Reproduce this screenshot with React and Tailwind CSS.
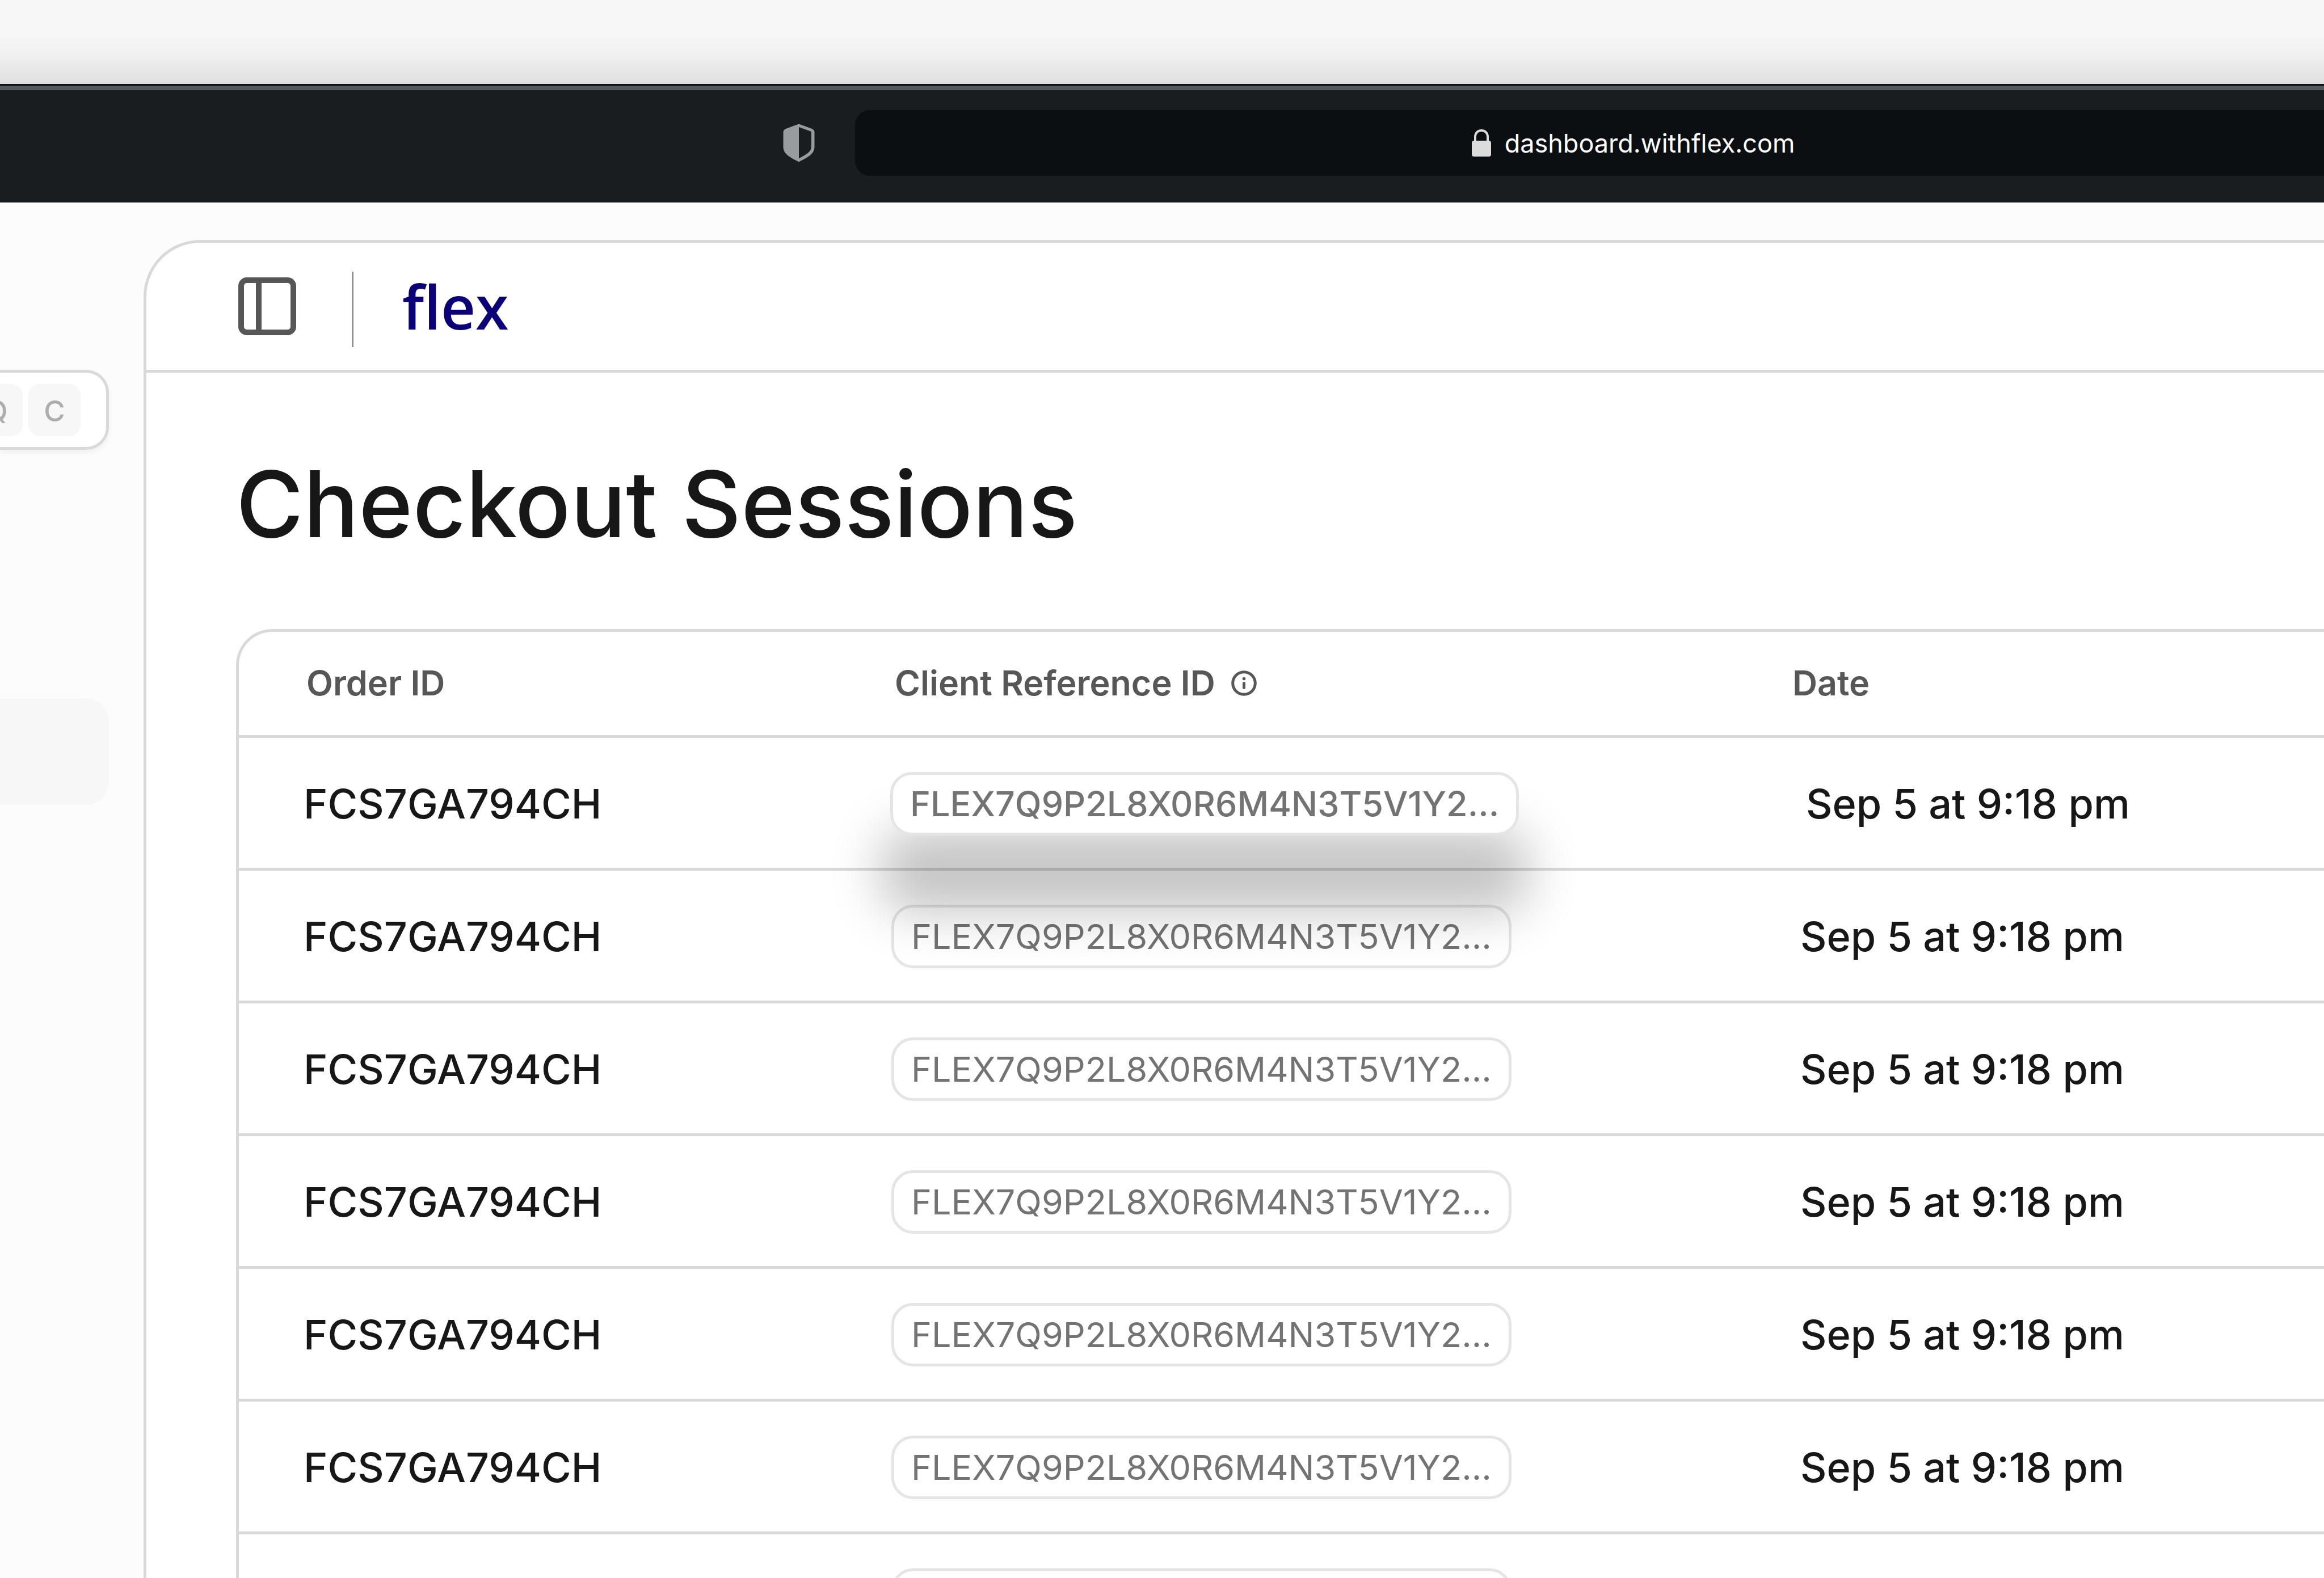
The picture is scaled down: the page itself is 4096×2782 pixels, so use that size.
const sessions = [
  { orderId: 'FCS7GA794CH', reference: 'FLEX7Q9P2L8X0R6M4N3T5V1Y2...', date: 'Sep 5 at 9:18 pm', active: true },
  { orderId: 'FCS7GA794CH', reference: 'FLEX7Q9P2L8X0R6M4N3T5V1Y2...', date: 'Sep 5 at 9:18 pm' },
  { orderId: 'FCS7GA794CH', reference: 'FLEX7Q9P2L8X0R6M4N3T5V1Y2...', date: 'Sep 5 at 9:18 pm' },
  { orderId: 'FCS7GA794CH', reference: 'FLEX7Q9P2L8X0R6M4N3T5V1Y2...', date: 'Sep 5 at 9:18 pm' },
  { orderId: 'FCS7GA794CH', reference: 'FLEX7Q9P2L8X0R6M4N3T5V1Y2...', date: 'Sep 5 at 9:18 pm' },
  { orderId: 'FCS7GA794CH', reference: 'FLEX7Q9P2L8X0R6M4N3T5V1Y2...', date: 'Sep 5 at 9:18 pm' },
  { orderId: 'FCS7GA794CH', reference: 'FLEX7Q9P2L8X0R6M4N3T5V1Y2...', date: 'Sep 5 at 9:18 pm' },
]

const ShieldIcon = () => (
  <svg viewBox="0 0 56 68" className="w-14 h-[68px] shrink-0" aria-hidden="true">
    <path
      d="M28 0.5 L51 9 Q55.500 11 55.500 15 V41 C55.500 54 43 59.500 28 67.500 C13 59.500 0.500 54 0.500 41 V15 Q0.500 11 5 9 Z M28 6 V61.500 C41 54 50 50 50 40 V14 Z"
      fill="#989c9f"
      fillRule="evenodd"
    />
  </svg>
)

const LockIcon = () => (
  <svg viewBox="0 0 34 48" className="w-[34px] h-12 shrink-0" aria-hidden="true">
    <rect x="0" y="20" width="34" height="28" rx="4" fill="#dcdcdc" />
    <path d="M6 21 V13.500 C6 6.500 10.500 2 17 2 C23.500 2 28 6.500 28 13.500 V21" fill="none" stroke="#dcdcdc" strokeWidth="4" />
  </svg>
)

const SidebarIcon = () => (
  <svg viewBox="0 0 102 102" className="w-[102px] h-[102px]" fill="none" stroke="#575757" strokeWidth="10" aria-hidden="true">
    <rect x="5" y="5" width="92" height="92" rx="10" />
    <path d="M36 5 V97" />
  </svg>
)

const InfoIcon = () => (
  <svg viewBox="0 0 45 45" className="w-[45px] h-[45px] shrink-0" fill="none" stroke="#575757" strokeWidth="5" strokeLinecap="round" aria-hidden="true">
    <circle cx="22.500" cy="22.500" r="19.800" />
    <path d="M22.500 22.500 V30.500" />
    <circle cx="22.500" cy="14.500" r="2.800" fill="#575757" stroke="none" />
  </svg>
)

const BrowserBar = () => (
  <header className="flex flex-col h-[209px] shrink-0 border-t-[3px] border-[#0d0f10] bg-[#191d20]">
    <div className="h-2 shrink-0 bg-[#54585a]" />
    <div className="flex flex-1 items-start pt-[35px]">
      <button type="button" aria-label="Privacy report" className="ml-[1380px] mt-6">
        <ShieldIcon />
      </button>
      <div className="flex flex-1 items-center justify-center gap-6 h-[116px] ml-[71px] pl-[154px] rounded-l-[26px] bg-[#0b0f12]">
        <LockIcon />
        <a href="#" className="text-[45px] leading-none text-white">dashboard.withflex.com</a>
      </div>
    </div>
  </header>
)

const Sidebar = () => (
  <aside className="flex flex-col w-[192px] shrink-0 pt-[295px]">
    <button
      type="button"
      className="flex items-center justify-end gap-[10px] h-[141px] pr-[45px] rounded-r-[40px] border-y-[5px] border-r-[5px] border-[#d9d9d9] bg-white text-[51px] leading-none font-medium text-[#adadad] shadow-[0_5px_10px_rgba(0,0,0,0.05)] overflow-hidden"
    >
      <kbd className="flex items-center justify-center w-[92px] h-[92px] pt-1 shrink-0 rounded-[20px] bg-[#f7f7f7] font-[Inter,sans-serif]">Q</kbd>
      <kbd className="flex items-center justify-center w-[92px] h-[92px] pt-1 shrink-0 rounded-[20px] bg-[#f7f7f7] font-[Inter,sans-serif]">C</kbd>
    </button>
    <a href="#" aria-label="Checkout Sessions" className="block h-[188px] mt-[438px] rounded-r-[40px] bg-[#f7f7f7]" />
  </aside>
)

const ReferenceChip = ({ text, active }) => (
  <span
    className={
      active
        ? 'relative z-10 inline-flex items-center h-28 px-[30px] rounded-[38px] border-[5px] border-[#e5e5e5] bg-white text-[61px] leading-none font-medium text-[#737373] shadow-[0_118px_88px_18px_rgba(0,0,0,0.23)]'
        : 'inline-flex items-center h-28 ml-0.5 px-[30px] rounded-[38px] border-[5px] border-[#e5e5e5] bg-white text-[61px] leading-none font-normal text-[#737373]'
    }
  >
    {text}
  </span>
)

const SessionsTable = () => (
  <div className="ml-[158px] mt-[125px] border-t-[5px] border-l-[5px] border-[#d9d9d9] rounded-tl-[64px]">
    <table className="w-full table-fixed text-left whitespace-nowrap">
      <colgroup>
        <col className="w-[1148px]" />
        <col className="w-[1588px]" />
        <col />
      </colgroup>
      <thead>
        <tr className="h-[184px] border-b-[5px] border-[#d9d9d9] text-[61px] leading-none text-[#575757]">
          <th className="pl-[119px] font-semibold">Order ID</th>
          <th className="pl-2 font-semibold">
            <span className="flex items-center gap-7">
              Client Reference ID
              <InfoIcon />
            </span>
          </th>
          <th className="pl-0.5 font-semibold">Date</th>
        </tr>
      </thead>
      <tbody>
        {sessions.map((session, i) => (
          <tr key={i} className="h-[234px] border-b-[5px] border-[#d9d9d9] text-[72px] leading-none font-medium text-[#171717]">
            <td className="pt-1 pl-[114px]">{session.orderId}</td>
            <td className="pt-1">
              <div className="flex items-center">
                <ReferenceChip text={session.reference} active={session.active} />
              </div>
            </td>
            <td className={session.active ? 'pt-1 pl-[26px]' : 'pt-1 pl-4'}>{session.date}</td>
          </tr>
        ))}
      </tbody>
    </table>
  </div>
)

const App = () => {
  return (
    <div className="flex flex-col h-screen overflow-hidden bg-[#f7f7f7] font-[Inter,sans-serif]">
      <div className="h-[148px] shrink-0 bg-linear-to-b from-[#f7f7f7] from-40% via-[#f0f0f0] via-65% to-[#dfdfdf]" />
      <BrowserBar />
      <div className="flex flex-1 min-h-0 bg-[#fcfcfc]">
        <Sidebar />
        <main className="flex-1 min-w-0 ml-[61px] mt-[66px] border-t-[5px] border-l-[5px] border-[#d9d9d9] rounded-tl-[100px] bg-white">
          <div className="flex items-center h-[229px] pl-[162px] border-b-[5px] border-[#d9d9d9]">
            <button type="button" aria-label="Toggle sidebar">
              <SidebarIcon />
            </button>
            <div className="self-end w-[3px] h-[133px] ml-[98px] mb-10 bg-[#8f8f8f]" />
            <a href="#" className="ml-[86px] font-['Open_Sans',sans-serif] text-[106px] leading-none font-semibold text-[#0b0078]">flex</a>
          </div>
          <h1 className="pl-[158px] mt-[135px] text-[162px] leading-[192px] font-medium text-[#171717]">Checkout Sessions</h1>
          <SessionsTable />
        </main>
      </div>
    </div>
  )
}

export default App
